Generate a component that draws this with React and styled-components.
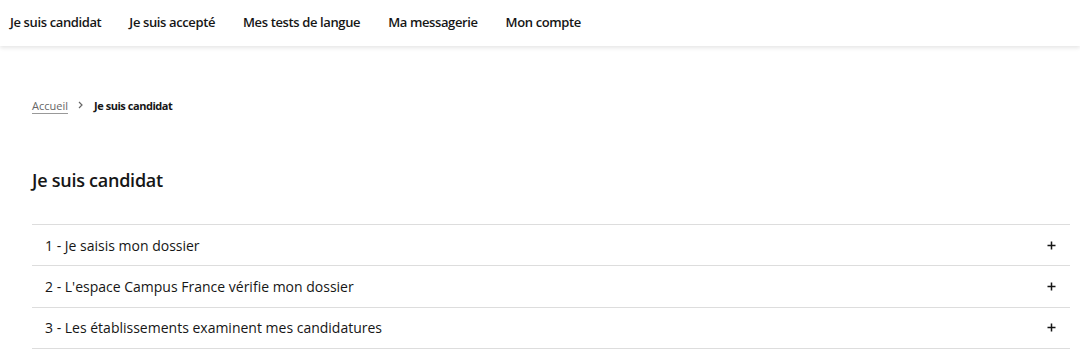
import React from "react";
import styled, { createGlobalStyle } from "styled-components";

const GlobalStyle = createGlobalStyle`
  body {
    margin: 0;
    background: #fff;
    font-family: "Open Sans", "Liberation Sans", sans-serif;
    color: #161616;
  }
`;

const NavBar = styled.nav`
  display: flex;
  height: 46px;
  align-items: center;
  padding: 0 0 2px 10px;
  box-sizing: border-box;
  gap: 28px;
  box-shadow: 0 2px 4px rgba(0, 0, 0, 0.1);
`;

const NavLink = styled.a`
  font-size: 13px;
  font-weight: 600;
  color: #161616;
  text-decoration: none;
  letter-spacing: -0.38px;
`;

const Main = styled.main`
  padding: 50px 10px 0 32px;
`;

const Breadcrumb = styled.div`
  display: flex;
  align-items: center;
  font-size: 11px;
  gap: 10px;
  height: 18px;
`;

const CrumbLink = styled.a`
  color: #666;
  text-decoration: underline;
  text-underline-offset: 3px;
  text-decoration-color: #999;
`;

const Chevron = styled.svg`
  width: 6px;
  height: 8px;
`;

const Current = styled.span`
  font-weight: 700;
  color: #161616;
  letter-spacing: -0.45px;
`;

const Title = styled.h1`
  margin: 54px 0 32px;
  font-size: 18px;
  font-weight: 600;
  line-height: 24px;
  letter-spacing: -0.25px;
`;

const List = styled.div`
  border-top: 1px solid #ddd;
`;

const Row = styled.div`
  display: flex;
  align-items: center;
  justify-content: space-between;
  height: 40.33px;
  padding: 0 14px 0 13px;
  border-bottom: 1px solid #ddd;
  font-size: 14px;
  color: #161616;
`;

const PlusIcon = styled.svg`
  width: 9px;
  height: 9px;
`;

const steps = [
  "1 - Je saisis mon dossier",
  "2 - L'espace Campus France vérifie mon dossier",
  "3 - Les établissements examinent mes candidatures",
];

export default function App() {
  return (
    <>
      <GlobalStyle />
      <NavBar>
        <NavLink>Je suis candidat</NavLink>
        <NavLink>Je suis accepté</NavLink>
        <NavLink>Mes tests de langue</NavLink>
        <NavLink>Ma messagerie</NavLink>
        <NavLink>Mon compte</NavLink>
      </NavBar>
      <Main>
        <Breadcrumb>
          <CrumbLink>Accueil</CrumbLink>
          <Chevron viewBox="0 0 6 8">
            <path d="M1 1l3 3-3 3" fill="none" stroke="#666" strokeWidth="1.2" />
          </Chevron>
          <Current>Je suis candidat</Current>
        </Breadcrumb>
        <Title>Je suis candidat</Title>
        <List>
          {steps.map((s) => (
            <Row key={s}>
              <span>{s}</span>
              <PlusIcon viewBox="0 0 9 9">
                <path d="M4.5 0.5v8M0.5 4.5h8" stroke="#161616" strokeWidth="1.5" />
              </PlusIcon>
            </Row>
          ))}
        </List>
      </Main>
    </>
  );
}
